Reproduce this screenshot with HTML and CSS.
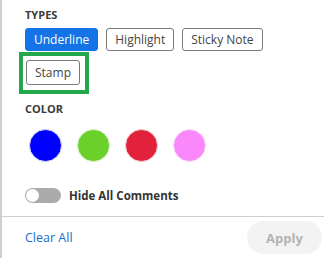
FILE: index.html
```html
<!DOCTYPE html>
<html lang="en">
<head>
  <meta charset="UTF-8">
  <title>Comment Filter</title>
  <link rel="stylesheet" href="styles.css">
</head>
<body>
  <div class="panel">
    <div class="content">
      <h3 class="section-title">TYPES</h3>
      <div class="types">
        <button class="type-btn active">Underline</button>
        <button class="type-btn">Highlight</button>
        <button class="type-btn">Sticky Note</button>
        <div class="focus-box">
          <button class="type-btn">Stamp</button>
        </div>
      </div>

      <h3 class="section-title color-title">COLOR</h3>
      <div class="colors">
        <span class="swatch blue"></span>
        <span class="swatch green"></span>
        <span class="swatch red"></span>
        <span class="swatch pink"></span>
      </div>

      <label class="toggle-row">
        <span class="toggle"><span class="knob"></span></span>
        <span class="toggle-label">Hide All Comments</span>
      </label>
    </div>

    <div class="footer">
      <a href="#" class="clear-link">Clear All</a>
      <button class="apply-btn" disabled>Apply</button>
    </div>
  </div>
</body>
</html>
```

FILE: styles.css
```css
* {
  margin: 0;
  padding: 0;
  box-sizing: border-box;
  font-family: 'Open Sans', 'Noto Sans', sans-serif;
}

body {
  background-color: #fff;
  width: 324px;
  height: 258px;
  overflow: hidden;
}

.panel {
  border-left: 2px solid #cfcfcf;
  height: 258px;
  display: flex;
  flex-direction: column;
}

.content {
  padding: 7px 0 0 23px;
  height: 216px;
}

.section-title {
  font-size: 11px;
  font-weight: 700;
  color: #3a3a3a;
  line-height: 15px;
}

.types {
  display: flex;
  flex-wrap: wrap;
  align-items: flex-start;
  column-gap: 8px;
  margin-top: 6px;
  width: 260px;
}

.type-btn {
  height: 23px;
  padding: 0 8px;
  border: 1px solid #7a7a7a;
  border-radius: 3px;
  background-color: #fff;
  color: #444;
  font-size: 12px;
  line-height: 21px;
}

.type-btn.active {
  background-color: #1473e6;
  border-color: #1473e6;
  color: #fff;
}

.focus-box {
  margin: 1px 0 0 -6px;
  padding: 4px 5px 5px 3px;
  border: 4px solid #22a84a;
}

.focus-box .type-btn {
  height: 25px;
  line-height: 23px;
}

.color-title {
  margin-top: 7px;
}

.colors {
  display: flex;
  gap: 15px;
  margin: 13px 0 0 4px;
}

.swatch {
  width: 33px;
  height: 33px;
  border-radius: 50%;
  border: 1px solid;
}

.swatch.blue {
  background-color: #0000ff;
  border-color: #d6d6ff;
}

.swatch.green {
  background-color: #6bd12a;
  border-color: #d8f3c8;
}

.swatch.red {
  background-color: #e2213b;
  border-color: #f6cfd4;
}

.swatch.pink {
  background-color: #fb88fb;
  border-color: #fde0fd;
}

.toggle-row {
  display: flex;
  align-items: center;
  gap: 8px;
  margin-top: 26px;
}

.toggle {
  position: relative;
  width: 36px;
  height: 15px;
  border-radius: 8px;
  background-color: #ababab;
}

.knob {
  position: absolute;
  left: 1px;
  top: 1px;
  width: 13px;
  height: 13px;
  border-radius: 50%;
  background-color: #fff;
}

.toggle-label {
  font-size: 11.5px;
  font-weight: 700;
  color: #333;
}

.footer {
  border-top: 1px solid #cfcfcf;
  display: flex;
  justify-content: space-between;
  align-items: center;
  padding: 0 2px 0 23px;
  flex: 1;
}

.clear-link {
  color: #1a6ccf;
  text-decoration: none;
  font-size: 12.5px;
}

.apply-btn {
  width: 75px;
  height: 33px;
  border: none;
  border-radius: 17px;
  background-color: #f3f3f3;
  color: #b3b3b3;
  font-size: 13px;
  font-weight: 700;
}
```
